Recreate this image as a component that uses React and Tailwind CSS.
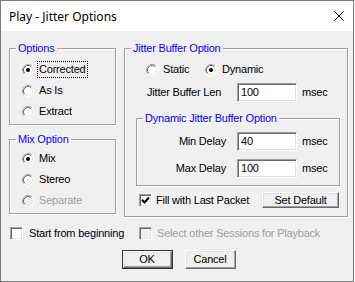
import React from 'react'

function Radio({ checked, disabled }) {
  return (
    <svg width="12" height="12" viewBox="0 0 12 12" className="shrink-0">
      <circle cx="6" cy="6" r="5" fill={disabled ? '#f0f0f0' : '#ffffff'} />
      <path d="M2.11 9.89 A5.5 5.5 0 0 1 9.89 2.11" fill="none" stroke="#a0a0a0" />
      <path d="M9.89 2.11 A5.5 5.5 0 0 1 2.11 9.89" fill="none" stroke="#ffffff" />
      <path d="M2.82 9.18 A4.5 4.5 0 0 1 9.18 2.82" fill="none" stroke="#696969" />
      <path d="M9.18 2.82 A4.5 4.5 0 0 1 2.82 9.18" fill="none" stroke="#e3e3e3" />
      {checked && <circle cx="6" cy="6" r="2" fill="#000" />}
    </svg>
  )
}

function Check({ checked, disabled }) {
  return (
    <div
      className={`w-[13px] h-[13px] shrink-0 border border-t-[#a0a0a0] border-l-[#a0a0a0] border-b-white border-r-white shadow-[inset_1px_1px_0_#696969,inset_-1px_-1px_0_#e3e3e3] flex items-center justify-center ${disabled ? 'bg-[#f0f0f0]' : 'bg-white'}`}
    >
      {checked && (
        <svg width="9" height="9" viewBox="0 0 9 9">
          <path d="M1 3.8 L3.5 6.5 L8 1.5" fill="none" stroke="#000" strokeWidth="2.1" />
        </svg>
      )}
    </div>
  )
}

function Field({ value }) {
  return (
    <div className="w-[60px] h-[19px] shrink-0 bg-white border border-t-[#a0a0a0] border-l-[#a0a0a0] border-b-white border-r-white shadow-[inset_1px_1px_0_#696969,inset_-1px_-1px_0_#e3e3e3] flex items-center pl-[3px]">
      {value}
    </div>
  )
}

function Button({ children, className }) {
  return (
    <div
      className={`bg-[#f0f0f0] border border-t-white border-l-white border-b-[#696969] border-r-[#696969] shadow-[inset_-1px_-1px_0_#a0a0a0,inset_1px_1px_0_#e3e3e3] flex items-center justify-center ${className}`}
    >
      {children}
    </div>
  )
}

function Group({ label, className, children }) {
  return (
    <fieldset className={`border border-[#a0a0a0] shadow-[inset_1px_1px_0_#fff,1px_1px_0_#fff] min-w-0 ${className}`}>
      <legend className="ml-[6px] px-[2px] text-[#0000ff] leading-[13px]">{label}</legend>
      {children}
    </fieldset>
  )
}

function RadioRow({ label, checked, disabled, focused }) {
  return (
    <div className="h-[21px] flex items-center gap-[3px]">
      <Radio checked={checked} disabled={disabled} />
      <span
        className={`px-[1px] py-[1px] border border-dotted ${focused ? 'border-black' : 'border-transparent'} ${disabled ? 'text-[#a0a0a0]' : ''}`}
      >
        {label}
      </span>
    </div>
  )
}

export default function App() {
  return (
    <div className="w-[354px] h-[282px] border border-[#7a7a7a] flex flex-col text-[11px] leading-[13px] tracking-[-0.2px] text-black font-['Liberation_Sans',Arial,sans-serif]">
      {/* title bar */}
      <div className="h-[30px] bg-white flex items-center justify-between pl-[8px] pr-[9px]">
        <span className="font-['Noto_Sans',sans-serif] text-[12px] tracking-normal">Play - Jitter Options</span>
        <svg width="10" height="10" viewBox="0 0 10 10">
          <path d="M0.5 0.5 L9.5 9.5 M9.5 0.5 L0.5 9.5" stroke="#000" strokeWidth="1" />
        </svg>
      </div>

      {/* body */}
      <div className="flex-1 bg-[#f0f0f0] pl-[8px] pr-[5px] pt-[11px] flex flex-col">
        <div className="flex gap-[8px]">
          <div className="w-[107px] flex flex-col gap-[8px]">
            <Group label="Options" className="h-[83px]">
              <div className="pt-[4px] pl-[12px] flex flex-col">
                <RadioRow label="Corrected" checked focused />
                <RadioRow label="As Is" />
                <RadioRow label="Extract" />
              </div>
            </Group>
            <Group label="Mix Option" className="h-[81px]">
              <div className="pt-[2px] pl-[12px] flex flex-col">
                <RadioRow label="Mix" checked />
                <RadioRow label="Stereo" />
                <RadioRow label="Separate" disabled />
              </div>
            </Group>
          </div>

          <Group label="Jitter Buffer Option" className="w-[224px] h-[175px]">
            <div className="mt-[4px] h-[21px] pl-[21px] flex items-center">
              <div className="w-[59px] flex items-center gap-[5px]">
                <Radio />
                <span>Static</span>
              </div>
              <div className="flex items-center gap-[5px]">
                <Radio checked />
                <span>Dynamic</span>
              </div>
            </div>
            <div className="mt-[3px] pl-[22px] flex items-center">
              <span className="w-[90px]">Jitter Buffer Len</span>
              <Field value="100" />
              <span className="ml-[5px]">msec</span>
            </div>

            <Group label="Dynamic Jitter Buffer Option" className="ml-[11px] mt-[10px] w-[204px] h-[74px]">
              <div className="mt-[7px] flex items-center">
                <span className="w-[89px] text-right">Min Delay</span>
                <div className="ml-[11px]">
                  <Field value="40" />
                </div>
                <span className="ml-[5px]">msec</span>
              </div>
              <div className="mt-[8px] flex items-center">
                <span className="w-[89px] text-right">Max Delay</span>
                <div className="ml-[11px]">
                  <Field value="100" />
                </div>
                <span className="ml-[5px]">msec</span>
              </div>
            </Group>

            <div className="mt-[6px] pl-[14px] pr-[8px] flex items-center">
              <Check checked />
              <span className="ml-[4px]">Fill with Last Packet</span>
              <Button className="ml-auto w-[77px] h-[16px]">Set Default</Button>
            </div>
          </Group>
        </div>

        <div className="mt-[10px] pl-[1px] flex items-center">
          <div className="w-[129px] flex items-center gap-[6px]">
            <Check />
            <span>Start from beginning</span>
          </div>
          <div className="flex items-center gap-[5px]">
            <Check disabled />
            <span className="text-[#a0a0a0]">Select other Sessions for Playback</span>
          </div>
        </div>

        <div className="mt-[10px] flex justify-center gap-[12px]">
          <div className="border border-[#333]">
            <Button className="w-[49px] h-[17px]">OK</Button>
          </div>
          <Button className="w-[51px] h-[19px]">Cancel</Button>
        </div>
      </div>
    </div>
  )
}
